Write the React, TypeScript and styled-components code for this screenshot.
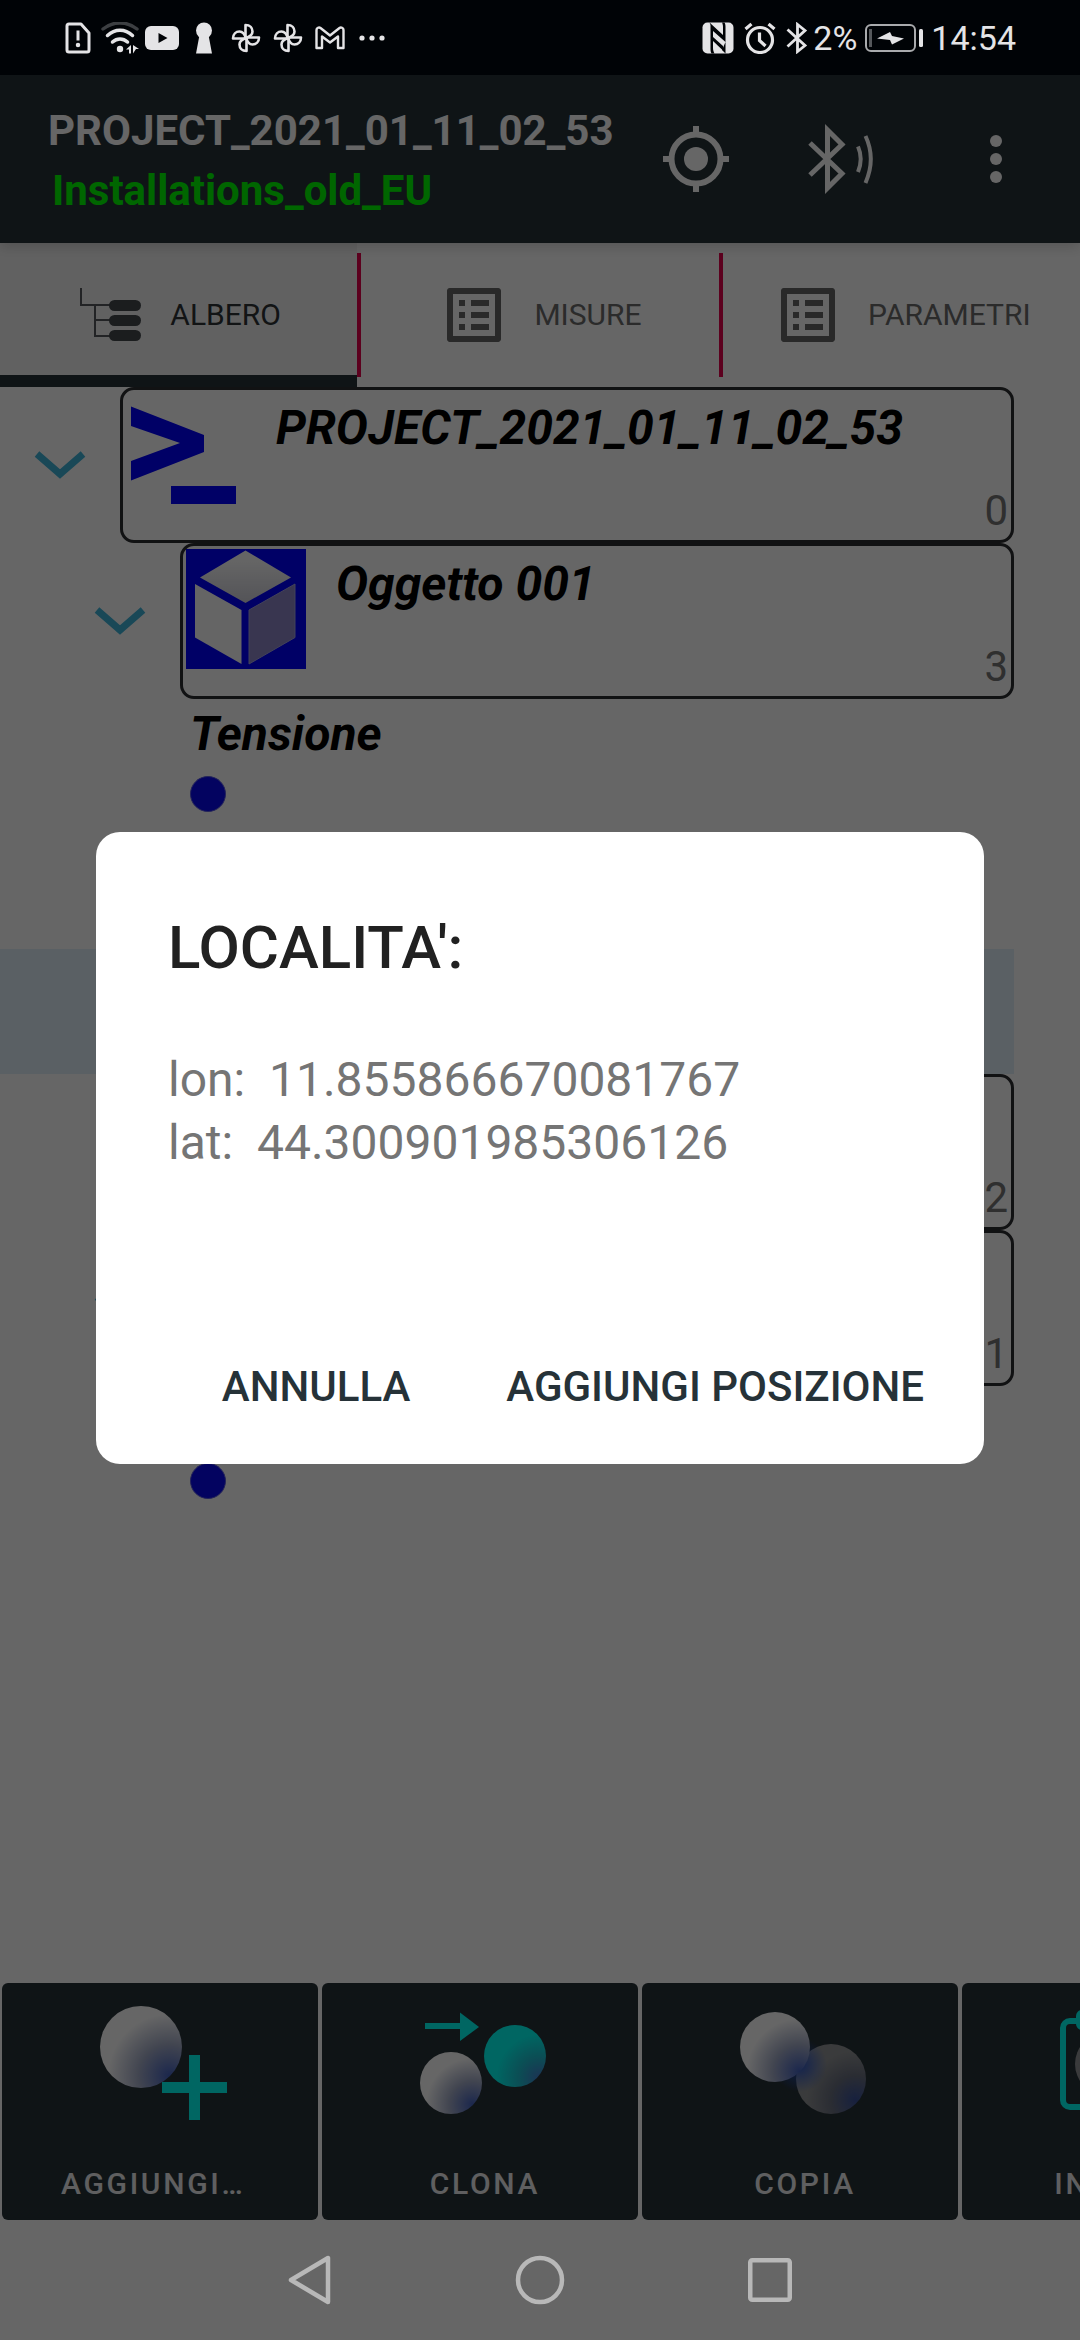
import React from "react";
import styled, { createGlobalStyle } from "styled-components";

const GlobalStyle = createGlobalStyle`
  *, *::before, *::after { box-sizing: border-box; }
  body {
    margin: 0;
    background: #fff;
    font-family: Roboto, "Noto Sans", sans-serif;
  }
  button {
    margin: 0;
    padding: 0;
    border: 0;
    background: none;
    color: inherit;
    font: inherit;
  }
  svg { display: block; flex: none; }
`;

/* ---------- shell ---------- */

const Screen = styled.div`
  display: flex;
  flex-direction: column;
  height: 100vh;
  overflow: hidden;
  background: #fff;
`;

const StatusBar = styled.div`
  position: relative;
  z-index: 2;
  display: flex;
  flex: none;
  align-items: center;
  justify-content: space-between;
  height: 75px;
  padding: 0 64px 0 57px;
  background: #000306;
  color: #e4e4e6;
  font-size: 34px;
  line-height: 40px;
`;

const StatusSlots = styled.div`
  display: flex;
  align-items: center;
`;

const StatusSlot = styled.span<{ $narrow?: boolean }>`
  display: flex;
  justify-content: center;
  width: ${(p) => (p.$narrow ? 32 : 42)}px;
`;

const StatusText = styled.span<{ $gap?: number }>`
  margin-left: ${(p) => p.$gap ?? 0}px;
`;

/* ---------- app bar ---------- */

const AppBar = styled.header`
  position: relative;
  display: flex;
  flex: none;
  align-items: center;
  height: 168px;
  padding-left: 48px;
  background: #263238;
  color: #fff;
  box-shadow: 0 4px 12px rgba(0, 0, 0, 0.16);
  z-index: 1;
`;

const Titles = styled.div`
  flex: 1;
  min-width: 0;
  padding-top: 4px;
  font-size: 42px;
  font-weight: 700;
  line-height: 60px;
  white-space: nowrap;
`;

const ProjectTitle = styled.h1`
  margin: 0;
  font: inherit;
`;

const ProfileName = styled.div`
  padding-left: 4px;
  color: #00ff00;
`;

const BarAction = styled.button<{ $width: number }>`
  display: flex;
  align-items: center;
  justify-content: center;
  width: ${(p) => p.$width}px;
  height: 144px;
`;

/* ---------- tabs ---------- */

const TabBar = styled.nav`
  display: flex;
  flex: none;
  height: 144px;
`;

const Tab = styled.button<{ $active?: boolean }>`
  display: flex;
  flex: 1;
  align-items: center;
  justify-content: center;
  gap: 24px;
  min-width: 0;
  border-top: 12px solid transparent;
  border-bottom: 12px solid ${(p) => (p.$active ? "#263238" : "transparent")};
  background: ${(p) => (p.$active ? "#f3f3f3" : "#fff")};
  color: ${(p) => (p.$active ? "#2e3336" : "#6b6b6b")};
  font-size: 30px;
  line-height: 36px;
`;

const TabDivider = styled.span`
  width: 4px;
  margin: 10px 0;
  background: #e6004c;
`;

/* ---------- tree ---------- */

const Tree = styled.main`
  flex: 1;
  min-height: 0;
  padding-right: 66px;
  overflow: hidden;
`;

const NodeRow = styled.div<{ $level: number }>`
  display: flex;
  padding-left: ${(p) => p.$level * 60}px;
`;

const Expander = styled.button`
  display: flex;
  align-items: center;
  justify-content: center;
  width: 120px;
  height: 156px;
`;

const NodeCard = styled.div`
  display: flex;
  flex: 1;
  gap: 30px;
  height: 156px;
  padding: 3px;
  border: 3px solid #2b2d30;
  border-radius: 14px;
`;

const NodeTitle = styled.span`
  padding-top: 5px;
  color: #000;
  font-size: 48px;
  font-style: italic;
  font-weight: 700;
  line-height: 60px;
  white-space: nowrap;
`;

const NodeCount = styled.span`
  margin-left: auto;
  align-self: flex-end;
  color: #757575;
  font-size: 42px;
  line-height: 52px;
`;

const LeafRow = styled.div<{ $selected?: boolean }>`
  display: flex;
  flex-direction: column;
  height: 125px;
  padding-left: 190px;
  background: ${(p) => (p.$selected ? "#e1f0fa" : "transparent")};
`;

const LeafTitle = styled.div`
  height: 65px;
`;

const LeafDot = styled.span`
  width: 36px;
  height: 36px;
  margin-top: 12px;
  border: 1px solid #5a5ae0;
  border-radius: 50%;
  background: #0808f0;
`;

/* ---------- action strip ---------- */

const ActionStrip = styled.div`
  display: flex;
  flex: none;
  gap: 4px;
  padding: 0 2px;
  overflow: hidden;
`;

const ActionButton = styled.button`
  display: flex;
  flex: none;
  flex-direction: column;
  align-items: center;
  width: 316px;
  height: 237px;
  padding-top: 12px;
  border-radius: 6px;
  background: #263238;
  color: #fff;
  font-size: 30px;
  font-weight: 500;
  letter-spacing: 0.09em;
  line-height: 36px;
`;

const ActionLabel = styled.span<{ $truncated: boolean }>`
  width: 208px;
  margin: 27px 0 0 10px;
  opacity: 0.92;
  text-align: ${(p) => (p.$truncated ? "left" : "center")};
`;

const NavBar = styled.div`
  position: relative;
  z-index: 2;
  display: flex;
  flex: none;
  align-items: center;
  justify-content: center;
  height: 120px;
`;

const NavButton = styled.button`
  display: flex;
  align-items: center;
  justify-content: center;
  width: 230px;
  height: 120px;
`;

/* ---------- dialog ---------- */

const Scrim = styled.div`
  position: fixed;
  inset: 0;
  z-index: 1;
  display: flex;
  align-items: center;
  padding: 76px 96px 120px;
  background: rgba(0, 0, 0, 0.6);
`;

const Dialog = styled.section`
  flex: 1;
  padding: 80px 12px 24px 72px;
  border-radius: 24px;
  background: #fff;
`;

const DialogTitle = styled.h2`
  margin: 0 0 64px;
  color: #212121;
  font-size: 60px;
  font-weight: 500;
  line-height: 72px;
`;

const DialogMessage = styled.p`
  margin: 0 0 158px;
  color: #757575;
  font-size: 48px;
  line-height: 63px;
  white-space: pre;
`;

const DialogActions = styled.div`
  display: flex;
  justify-content: flex-end;
`;

const DialogButton = styled.button`
  height: 108px;
  padding: 0 48px;
  color: #263238;
  font-size: 42px;
  font-weight: 500;
  white-space: nowrap;
`;

/* ---------- icons ---------- */

const SimIcon = () => (
  <svg width="26" height="32" viewBox="0 0 26 32" fill="none" stroke="currentColor" strokeWidth="3">
    <path d="M4 2h12l8 9v17a2 2 0 0 1-2 2H4a2 2 0 0 1-2-2V4a2 2 0 0 1 2-2z" strokeLinejoin="round" />
    <path d="M13 8.500v10" />
    <circle cx="13" cy="23" r="1.500" fill="currentColor" strokeWidth="1.500" />
  </svg>
);

const WifiIcon = () => (
  <svg width="38" height="32" viewBox="0 0 38 32" fill="none" strokeLinecap="round">
    <path d="M2 7C12-1 26-1 36 7" stroke="#3c3f42" strokeWidth="3.500" />
    <path d="M6.500 13.500C14 6.500 24 6.500 31.500 13.500" stroke="currentColor" strokeWidth="3.500" />
    <path d="M11.500 20c4.500-4 10.500-4 15 0" stroke="currentColor" strokeWidth="3.500" />
    <circle cx="19" cy="27" r="3.200" fill="currentColor" />
    <path d="M30 23v8.500h-2v-4h-3zM32 31.500V23l6 4h-3z" fill="currentColor" />
  </svg>
);

const VideoIcon = () => (
  <svg width="34" height="24" viewBox="0 0 34 24">
    <rect width="34" height="24" rx="6" fill="currentColor" />
    <path d="M13.500 7l9 5-9 5z" fill="#000306" />
  </svg>
);

const KeyholeIcon = () => (
  <svg width="18" height="32" viewBox="0 0 18 32" fill="currentColor">
    <circle cx="9" cy="8.500" r="8" />
    <path d="M4.500 13h9l3.500 18.500H1z" />
  </svg>
);

const PinwheelIcon = () => (
  <svg width="30" height="30" viewBox="0 0 30 30" fill="none" stroke="currentColor" strokeWidth="2.600" strokeLinejoin="round">
    <path d="M14.500 15V2c4.500 0 7 3 7 6.500S18 14 14.500 15z" />
    <path d="M15 14.500h13c0 4.500-3 7-6.500 7S16 18 15 14.500z" />
    <path d="M15.500 15v13c-4.500 0-7-3-7-6.500S12 16 15.500 15z" />
    <path d="M15 15.500H2c0-4.500 3-7 6.500-7S14 12 15 15.500z" />
  </svg>
);

const MailIcon = () => (
  <svg width="30" height="24" viewBox="0 0 30 24" fill="none" stroke="currentColor" strokeWidth="2.400" strokeLinejoin="round">
    <path d="M1.500 4c0-2.200 2.500-3.200 4-2L15 9.500 24.500 2c1.500-1.200 4-.2 4 2v18h-5.500V10.500L15 16.500 7 10.500V22H1.500z" />
  </svg>
);

const MoreDotsIcon = () => (
  <svg width="26" height="6" viewBox="0 0 26 6" fill="currentColor">
    <circle cx="3" cy="3" r="2.600" />
    <circle cx="13" cy="3" r="2.600" />
    <circle cx="23" cy="3" r="2.600" />
  </svg>
);

const NfcIcon = () => (
  <svg width="32" height="32" viewBox="0 0 32 32">
    <rect x="0.500" y="0.500" width="31" height="31" rx="5" fill="currentColor" />
    <path d="M7.500 .5L21 13V5c0-2-.5-3.500-1-4.500h2.500C23.500 2 23.500 4 23.500 6v14L11 9v17c0 2 .5 3.800 1.500 5.500H9.500C8.500 30 8.500 28 8.500 26V3z" fill="#000306" />
    <path d="M11 15l10 9v4.500L11 19z" fill="#000306" />
    <path d="M23.500 20v11.500L20 28z" fill="#000306" />
  </svg>
);

const AlarmIcon = () => (
  <svg width="32" height="32" viewBox="0 0 32 32" fill="none" stroke="currentColor" strokeWidth="3.200">
    <circle cx="16" cy="18" r="12.500" />
    <path d="M15.500 10.500v8l6 5.500" />
    <path d="M1.500 7l6-5M30.500 7l-6-5" />
  </svg>
);

const BluetoothIcon = () => (
  <svg width="22" height="32" viewBox="0 0 22 32" fill="none" stroke="currentColor" strokeWidth="2.800">
    <path d="M1.500 7.500L19 23.500l-7.500 6v-27l7.500 6L1.500 24.500" />
  </svg>
);

const BatteryIcon = () => (
  <svg width="58" height="28" viewBox="0 0 58 28">
    <rect x="1" y="1" width="49" height="26" rx="5" fill="none" stroke="#a9abad" strokeWidth="2" />
    <path d="M5.500 5v18" stroke="#55585b" strokeWidth="3" />
    <path d="M12 14.500L25 8l2 4 12 2.500-12 6-2-4.500z" fill="currentColor" />
    <rect x="54" y="5" width="4" height="18" rx="1.500" fill="currentColor" />
  </svg>
);

const LocateIcon = () => (
  <svg width="66" height="68" viewBox="0 0 66 68" fill="none" stroke="currentColor" strokeWidth="6">
    <circle cx="33" cy="34" r="24.500" />
    <circle cx="33" cy="34" r="12" fill="currentColor" stroke="none" />
    <path d="M33 1v10M33 57v10M0 34h10M56 34h10" />
  </svg>
);

const BluetoothLinkIcon = () => (
  <svg width="66" height="72" viewBox="0 0 66 72" fill="none" stroke="currentColor" strokeWidth="5">
    <path d="M3 20l32 30.500L20.500 65V7L35 21.500 3 52" strokeMiterlimit="10" />
    <path d="M51 23.500c3.500 8 3.500 17 0 25.500M58.500 13c7 15 7 31 0 47" strokeWidth="4" />
  </svg>
);

const OverflowIcon = () => (
  <svg width="14" height="50" viewBox="0 0 14 50" fill="currentColor">
    <circle cx="7" cy="7" r="6" />
    <circle cx="7" cy="25" r="6" />
    <circle cx="7" cy="43" r="6" />
  </svg>
);

const TreeIcon = () => (
  <svg width="70" height="56" viewBox="0 0 70 56" fill="none" stroke="#55595c" strokeWidth="2">
    <path d="M5 1v17h30M19 18v31h16M19 33h16" />
    <g fill="#44494d" stroke="none">
      <rect x="33" y="13" width="32" height="11" rx="5.500" />
      <rect x="33" y="28" width="32" height="11" rx="5.500" />
      <rect x="33" y="43" width="32" height="11" rx="5.500" />
    </g>
  </svg>
);

const ListIcon = () => (
  <svg width="72" height="72" viewBox="0 0 24 24" fill="#666">
    <path d="M11 7h6v2h-6V7zm0 4h6v2h-6v-2zm0 4h6v2h-6v-2zM7 7h2v2H7V7zm0 4h2v2H7v-2zm0 4h2v2H7v-2zM20.100 3H3.900c-.5 0-.9.4-.9.9v16.200c0 .4.4.9.9.9h16.200c.4 0 .9-.5.9-.9V3.900c0-.5-.5-.9-.9-.9zM19 19H5V5h14v14z" />
  </svg>
);

const ChevronIcon = () => (
  <svg width="52" height="28" viewBox="0 0 52 28" fill="none">
    <path d="M3 3l23 20L49 3" stroke="#40b4da" strokeWidth="7" />
  </svg>
);

const PromptIcon = () => (
  <svg width="120" height="120" viewBox="0 0 120 120" fill="#0000ff">
    <path d="M5 13.500L78 42v17L5 87.500V68l49-18L5 33z" />
    <rect x="45" y="93" width="65" height="18" />
  </svg>
);

const CubeIcon = () => (
  <svg width="120" height="120" viewBox="0 0 120 120">
    <defs>
      <linearGradient id="cubeTop" x1="0" y1="0" x2="0" y2="1">
        <stop offset="0.200" stopColor="#fdfdfd" />
        <stop offset="1" stopColor="#d0d0da" />
      </linearGradient>
    </defs>
    <rect width="120" height="120" fill="#0000ff" />
    <path d="M59.500 1.500L105 28.500 59.500 54 14 28.500z" fill="url(#cubeTop)" />
    <path d="M9 35l46.500 26v54L9 88.500z" fill="#fdfdfd" />
    <path d="M109 35L63 61v54l46-26.500z" fill="#8e88c8" stroke="#a6a4e0" strokeWidth="1" />
  </svg>
);

const BallGradients = () => (
  <defs>
    <radialGradient id="ballWhite" cx="0.850" cy="0.850" r="0.750">
      <stop offset="0" stopColor="#4462c0" />
      <stop offset="0.500" stopColor="#a3acc8" />
      <stop offset="1" stopColor="#fff" />
    </radialGradient>
    <radialGradient id="ballTeal" cx="0.900" cy="0.850" r="0.700">
      <stop offset="0" stopColor="#4680d0" />
      <stop offset="0.500" stopColor="#1cc4d4" />
      <stop offset="1" stopColor="#00fff5" />
    </radialGradient>
    <radialGradient id="ballDim" cx="0.850" cy="0.800" r="0.700">
      <stop offset="0" stopColor="#3a519c" />
      <stop offset="0.500" stopColor="#6a7080" />
      <stop offset="1" stopColor="#929496" />
    </radialGradient>
    <radialGradient id="ballGlow">
      <stop offset="0" stopColor="#2450c8" stopOpacity="0.900" />
      <stop offset="1" stopColor="#2450c8" stopOpacity="0" />
    </radialGradient>
  </defs>
);

const AddIcon = () => (
  <svg width="144" height="144" viewBox="0 0 144 144">
    <BallGradients />
    <circle cx="53" cy="52" r="41" fill="url(#ballWhite)" />
    <path d="M106.500 60v65M74 92.500h65" stroke="#00fff5" strokeWidth="11" />
  </svg>
);

const CloneIcon = () => (
  <svg width="144" height="144" viewBox="0 0 144 144">
    <path d="M17 31h36" stroke="#00fff5" strokeWidth="6" />
    <path d="M52 17.500l19 14.500-19 14z" fill="#00fff5" />
    <circle cx="43" cy="88" r="31" fill="url(#ballWhite)" />
    <circle cx="107" cy="61" r="31" fill="url(#ballTeal)" />
  </svg>
);

const CopyIcon = () => (
  <svg width="144" height="144" viewBox="0 0 144 144">
    <circle cx="103" cy="84" r="35" fill="url(#ballDim)" />
    <circle cx="72" cy="70" r="27" fill="url(#ballGlow)" />
    <circle cx="47" cy="52" r="35" fill="url(#ballWhite)" />
  </svg>
);

const PasteIcon = () => (
  <svg width="144" height="144" viewBox="0 0 144 144">
    <rect x="15" y="26" width="86" height="86" rx="7" fill="none" stroke="#00fff5" strokeWidth="6" />
    <rect x="28" y="15" width="60" height="20" rx="6" fill="#00fff5" />
    <circle cx="58" cy="69" r="31" fill="url(#ballDim)" />
  </svg>
);

const BackIcon = () => (
  <svg width="44" height="50" viewBox="0 0 44 50" fill="none" stroke="#b8b8b8" strokeWidth="4.500" strokeLinejoin="round">
    <path d="M40 3v44L3 25z" />
  </svg>
);

const HomeIcon = () => (
  <svg width="50" height="50" viewBox="0 0 50 50" fill="none" stroke="#b8b8b8" strokeWidth="4.500">
    <circle cx="25" cy="25" r="22" />
  </svg>
);

const RecentsIcon = () => (
  <svg width="44" height="44" viewBox="0 0 44 44" fill="none" stroke="#b8b8b8" strokeWidth="4.500">
    <rect x="2.250" y="2.250" width="39.500" height="39.500" rx="2" />
  </svg>
);

/* ---------- data ---------- */

const STATUS_ICONS = [SimIcon, WifiIcon, VideoIcon, KeyholeIcon, PinwheelIcon, PinwheelIcon, MailIcon, MoreDotsIcon];

const ACTIONS = [
  { label: "AGGIUNGI…", Icon: AddIcon },
  { label: "CLONA", Icon: CloneIcon },
  { label: "COPIA", Icon: CopyIcon },
  { label: "INCOLLA", Icon: PasteIcon },
];

type NodeProps = {
  level: number;
  count: number;
  title?: string;
  expandable?: boolean;
  children?: React.ReactNode;
};

function TreeNode({ level, count, title, expandable, children }: NodeProps) {
  return (
    <NodeRow $level={level}>
      <Expander aria-label="Espandi">{expandable && <ChevronIcon />}</Expander>
      <NodeCard>
        {children}
        {title && <NodeTitle>{title}</NodeTitle>}
        <NodeCount>{count}</NodeCount>
      </NodeCard>
    </NodeRow>
  );
}

export default function App() {
  return (
    <Screen>
      <GlobalStyle />
      <StatusBar>
        <StatusSlots>
          {STATUS_ICONS.map((Icon, i) => (
            <StatusSlot key={i}>
              <Icon />
            </StatusSlot>
          ))}
        </StatusSlots>
        <StatusSlots>
          <StatusSlot><NfcIcon /></StatusSlot>
          <StatusSlot><AlarmIcon /></StatusSlot>
          <StatusSlot $narrow><BluetoothIcon /></StatusSlot>
          <StatusText>2%</StatusText>
          <StatusText $gap={8}><BatteryIcon /></StatusText>
          <StatusText $gap={8}>14:54</StatusText>
        </StatusSlots>
      </StatusBar>

      <AppBar>
        <Titles>
          <ProjectTitle>PROJECT_2021_01_11_02_53</ProjectTitle>
          <ProfileName>Installations_old_EU</ProfileName>
        </Titles>
        <BarAction $width={144} aria-label="Posizione"><LocateIcon /></BarAction>
        <BarAction $width={144} aria-label="Bluetooth"><BluetoothLinkIcon /></BarAction>
        <BarAction $width={168} aria-label="Altre opzioni"><OverflowIcon /></BarAction>
      </AppBar>

      <TabBar>
        <Tab $active><TreeIcon />ALBERO</Tab>
        <TabDivider />
        <Tab><ListIcon />MISURE</Tab>
        <TabDivider />
        <Tab><ListIcon />PARAMETRI</Tab>
      </TabBar>

      <Tree>
        <TreeNode level={0} count={0} title="PROJECT_2021_01_11_02_53" expandable>
          <PromptIcon />
        </TreeNode>
        <TreeNode level={1} count={3} title="Oggetto 001" expandable>
          <CubeIcon />
        </TreeNode>
        <LeafRow>
          <NodeTitle>Tensione</NodeTitle>
          <LeafDot />
        </LeafRow>
        <LeafRow />
        <LeafRow $selected />
        <TreeNode level={1} count={2} />
        <TreeNode level={1} count={1} expandable />
        <LeafRow>
          <LeafTitle />
          <LeafDot />
        </LeafRow>
      </Tree>

      <ActionStrip>
        {ACTIONS.map(({ label, Icon }) => (
          <ActionButton key={label}>
            <Icon />
            <ActionLabel $truncated={label.endsWith("…")}>{label}</ActionLabel>
          </ActionButton>
        ))}
      </ActionStrip>

      <NavBar>
        <NavButton aria-label="Indietro"><BackIcon /></NavButton>
        <NavButton aria-label="Home"><HomeIcon /></NavButton>
        <NavButton aria-label="Recenti"><RecentsIcon /></NavButton>
      </NavBar>

      <Scrim>
        <Dialog role="dialog" aria-modal="true" aria-labelledby="dialog-title">
          <DialogTitle id="dialog-title">LOCALITA':</DialogTitle>
          <DialogMessage>{"lon:  11.855866670081767\nlat:  44.300901985306126"}</DialogMessage>
          <DialogActions>
            <DialogButton>ANNULLA</DialogButton>
            <DialogButton>AGGIUNGI POSIZIONE</DialogButton>
          </DialogActions>
        </Dialog>
      </Scrim>
    </Screen>
  );
}
